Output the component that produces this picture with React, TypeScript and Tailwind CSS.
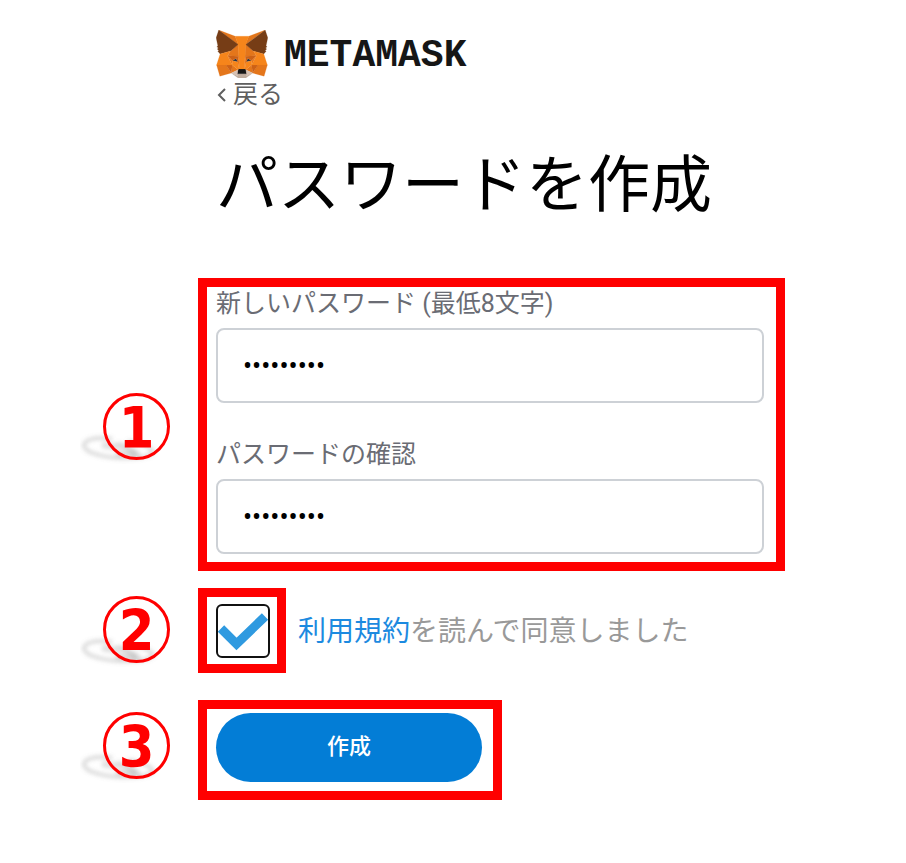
import type { ReactNode } from "react";

const foxFacets: [string, string[]][] = [
  ["#e2761b", ["274.1,35.5 174.6,109.4 193,65.8"]],
  [
    "#e4761b",
    [
      "44.4,35.5 143.1,110.1 125.6,65.8",
      "238.3,206.8 211.8,247.4 268.5,263 284.8,207.7",
      "33.9,207.7 50.1,263 106.8,247.4 80.3,206.8",
      "103.6,138.2 87.8,162.1 144.1,164.6 142.1,104.1",
      "214.9,138.2 175.9,103.4 174.6,164.6 230.8,162.1",
      "106.8,247.4 140.6,230.9 111.4,208.1",
      "177.9,230.9 211.8,247.4 207.1,208.1",
    ],
  ],
  ["#d7c1b3", ["211.8,247.4 177.9,230.9 180.6,253 180.3,262.3", "106.8,247.4 138.3,262.3 138.1,253 140.6,230.9"]],
  ["#233447", ["138.8,193.5 110.6,185.2 130.5,176.1", "179.7,193.5 188,176.1 208,185.2"]],
  [
    "#cd6116",
    [
      "106.8,247.4 111.6,206.8 80.3,207.7",
      "207,206.8 211.8,247.4 238.3,207.7",
      "230.8,162.1 174.6,164.6 179.8,193.5 188.1,176.1 208.1,185.2",
      "110.6,185.2 130.6,176.1 138.8,193.5 144.1,164.6 87.8,162.1",
    ],
  ],
  [
    "#e4751f",
    [
      "87.8,162.1 111.4,208.1 110.6,185.2",
      "208.1,185.2 207.1,208.1 230.8,162.1",
      "144.1,164.6 138.8,193.5 145.4,227.6 146.9,182.7",
      "174.6,164.6 171.9,182.6 173.1,227.6 179.8,193.5",
    ],
  ],
  [
    "#f6851b",
    [
      "179.8,193.5 173.1,227.6 177.9,230.9 207.1,208.1 208.1,185.2",
      "110.6,185.2 111.4,208.1 140.6,230.9 145.4,227.6 138.8,193.5",
    ],
  ],
  [
    "#c0ad9e",
    [
      "180.3,262.3 180.6,253 178.1,250.8 140.4,250.8 138.1,253 138.3,262.3 106.8,247.4 117.8,256.4 140.1,271.9 178.4,271.9 200.8,256.4 211.8,247.4",
    ],
  ],
  ["#161616", ["177.9,230.9 173.1,227.6 145.4,227.6 140.6,230.9 138.1,253 140.4,250.8 178.1,250.8 180.6,253"]],
  [
    "#763d16",
    [
      "278.3,114.2 286.8,73.4 274.1,35.5 177.9,106.9 214.9,138.2 267.2,153.5 278.8,140 273.8,136.4 281.8,129.1 275.6,124.3 283.6,118.2",
      "31.8,73.4 40.3,114.2 34.9,118.2 42.9,124.3 36.8,129.1 44.8,136.4 39.8,140 51.3,153.5 103.6,138.2 140.6,106.9 44.4,35.5",
    ],
  ],
  [
    "#f6851b",
    [
      "267.2,153.5 214.9,138.2 230.8,162.1 207.1,208.1 238.3,207.7 284.8,207.7",
      "103.6,138.2 51.3,153.5 33.9,207.7 80.3,207.7 111.4,208.1 87.8,162.1",
      "174.6,164.6 177.9,106.9 193.1,65.8 125.6,65.8 140.6,106.9 144.1,164.6 145.3,182.8 145.4,227.6 173.1,227.6 173.3,182.8",
    ],
  ],
];

function Fox() {
  return (
    <svg viewBox="31 35 257 237" className="h-12 w-[52px]" aria-hidden="true">
      {foxFacets.map(([fill, shapes]) =>
        shapes.map((points) => (
          <polygon key={points} points={points} fill={fill} stroke={fill} strokeLinejoin="round" />
        )),
      )}
    </svg>
  );
}

/* Ringed step number with a soft shadow falling to its lower left. */
function StepMarker({ step }: { step: number }) {
  return (
    <div className="relative flex h-[67px] w-[90px] justify-end">
      <svg viewBox="0 0 90 72" className="absolute top-0 left-0 h-[72px] w-[90px]" aria-hidden="true">
        <defs>
          <filter id={`soft-${step}`} x="-20%" y="-40%" width="140%" height="180%">
            <feGaussianBlur stdDeviation="2" />
          </filter>
        </defs>
        <g filter={`url(#soft-${step})`} fill="none" stroke="#777777">
          <path d="M32 46C16 43 3 47 4 53c1 7 22 12 40 12s32-3 28-8c-3-4-14-7-24-9" strokeWidth="3" opacity="0.35" />
          <path d="M22 52l14 2M36 60l24 1" strokeWidth="6" opacity="0.25" />
          <path d="M36 52c10 0 12 4 20 8" strokeWidth="5" opacity="0.3" />
        </g>
      </svg>
      <span className="relative flex size-[67px] items-center justify-center rounded-full border-3 border-[#ff0000] pt-1 font-['DejaVu_Sans_Condensed','DejaVu_Sans',sans-serif] text-[57px] leading-none font-bold text-[#ff0000]">
        {step}
      </span>
    </div>
  );
}

function Step({ step, markerClass, children }: { step: number; markerClass: string; children: ReactNode }) {
  return (
    <section className="grid grid-cols-[118px_minmax(0,1fr)]">
      <div className={markerClass}>
        <StepMarker step={step} />
      </div>
      {children}
    </section>
  );
}

function PasswordField({ id, label }: { id: string; label: string }) {
  return (
    <div className="flex flex-col gap-[9px]">
      <label htmlFor={id} className="pt-0.5 text-[25px] leading-[30px] text-[#6a6c74]">
        {label}
      </label>
      <input
        id={id}
        type="password"
        defaultValue="metafox12"
        className="h-[75px] w-full rounded-lg border-2 border-[#cdd1d6] bg-white px-[25px] font-[Roboto,sans-serif] text-[27px] text-black outline-none"
      />
    </div>
  );
}

export default function App() {
  return (
    <main className="min-h-screen bg-white px-20 pt-[29px] pb-10 font-[Roboto,'Noto_Sans_CJK_JP',sans-serif]">
      <form className="mx-auto max-w-[746px]" onSubmit={(e) => e.preventDefault()}>
        <header className="pl-[136px]">
          <div className="flex items-center gap-4">
            <Fox />
            <span className="pt-1 font-['Liberation_Mono',monospace] text-[38px] leading-[46px] font-bold text-[#161616]">
              METAMASK
            </span>
          </div>
          <button type="button" className="flex items-center gap-[5px] text-[25px] leading-8 text-[#5f5f5f]">
            <svg viewBox="0 0 12 16" className="h-4 w-3" fill="none" stroke="currentColor" strokeWidth="2" aria-hidden="true">
              <path d="M9 2L3 8l6 6" />
            </svg>
            戻る
          </button>
          <h1 className="pt-[35px] pb-[52px] text-[62px] leading-[80px] font-normal text-black">パスワードを作成</h1>
        </header>

        <div className="flex flex-col">
          <Step step={1} markerClass="self-center pt-1">
            <div className="flex max-w-[587px] flex-col gap-[35px] border-9 border-[#ff0000] pr-3 pb-2 pl-[9px]">
              <PasswordField id="new-password" label="新しいパスワード (最低8文字)" />
              <PasswordField id="confirm-password" label="パスワードの確認" />
            </div>
          </Step>

          <div className="pt-[17px]">
            <Step step={2} markerClass="pt-2">
              <div className="flex items-center gap-3">
                <div className="border-9 border-[#ff0000] pt-[7px] pr-[7px] pb-[6px] pl-[9px]">
                  <div className="relative size-[54px]">
                    <input
                      id="terms"
                      type="checkbox"
                      defaultChecked
                      className="peer block size-full appearance-none rounded-md border-2 border-[#111111] bg-white"
                    />
                    <svg
                      viewBox="0 0 54 54"
                      className="pointer-events-none absolute inset-0 hidden size-full peer-checked:block"
                      aria-hidden="true"
                    >
                      <path d="M5 24.500L20.500 40L49 12.500" fill="none" stroke="#2f9ae0" strokeWidth="9" />
                    </svg>
                  </div>
                </div>
                <label htmlFor="terms" className="pt-0.5 text-[28px] leading-9 text-[#999999]">
                  <a href="#terms" className="text-[#1c8ae0]">
                    利用規約
                  </a>
                  を読んで同意しました
                </label>
              </div>
            </Step>
          </div>

          <div className="pt-[27px]">
            <Step step={3} markerClass="pt-3">
              <div className="w-[304px] border-9 border-[#ff0000] pt-1 pr-[11px] pb-[9px] pl-[9px]">
                <button
                  type="submit"
                  className="block h-[69px] w-full rounded-full bg-[#037dd6] pb-0.5 text-[22px] leading-8 font-medium text-white"
                >
                  作成
                </button>
              </div>
            </Step>
          </div>
        </div>
      </form>
    </main>
  );
}
